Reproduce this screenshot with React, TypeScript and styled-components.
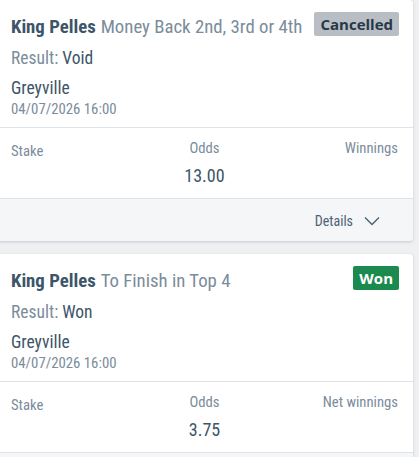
import React from 'react';
import styled, { createGlobalStyle } from 'styled-components';

const GlobalStyle = createGlobalStyle`
  html, body {
    margin: 0;
    padding: 0;
    background: #eef0f2;
    font-family: Roboto, "Liberation Sans", sans-serif;
    font-stretch: 75%;
  }
`;

const List = styled.div`
  display: flex;
  flex-direction: column;
  gap: 13px;
  padding: 0 6px 0 0;
  margin: 0 0 0 -4px;
`;

const Card = styled.div`
  background: #fff;
  border-radius: 4px;
  box-shadow: 0 1px 3px rgba(40, 60, 80, 0.22);
  overflow: hidden;
`;

const Body = styled.div`
  padding: 11px 14px 0 15px;
`;

const HeadRow = styled.div`
  display: flex;
  align-items: flex-start;
  justify-content: space-between;
`;

const Title = styled.div`
  font-size: 18.8px;
  line-height: 24px;
  padding-top: 4px;
  color: #7b8c9b;
`;

const Horse = styled.span`
  font-weight: 700;
  color: #3d5568;
  margin-right: 5px;
`;

const Badge = styled.span<{ $kind: 'cancelled' | 'won' }>`
  display: inline-block;
  font-family: "Open Sans", "Liberation Sans", sans-serif;
  font-stretch: 100%;
  font-weight: 700;
  font-size: 15px;
  line-height: 24px;
  padding: 0 6px;
  border-radius: 2px;
  margin-top: 1px;
  background: ${(p) => (p.$kind === 'won' ? '#1b8a4f' : '#b9bec4')};
  color: ${(p) => (p.$kind === 'won' ? '#fff' : '#263849')};
`;

const Result = styled.div`
  font-size: 17.5px;
  line-height: 20px;
  margin-top: 9px;
  color: #7b8c9b;
  span {
    color: #3d5568;
  }
`;

const Venue = styled.div`
  font-size: 17.5px;
  line-height: 20px;
  margin-top: 10px;
  color: #3d5568;
`;

const Date = styled.div`
  font-size: 14.8px;
  line-height: 18px;
  margin-top: 2px;
  color: #7b8c9b;
`;

const Stats = styled.div`
  display: grid;
  grid-template-columns: 1fr 1fr 1fr;
  margin-top: 9px;
  border-top: 1px solid #dfe3e7;
  padding: 11px 15px 0 15px;
  height: 71px;
  box-sizing: border-box;
`;

const StatCol = styled.div<{ $align: 'left' | 'center' | 'right' }>`
  text-align: ${(p) => p.$align};
  display: flex;
  flex-direction: column;
  align-items: ${(p) =>
    p.$align === 'left' ? 'flex-start' : p.$align === 'right' ? 'flex-end' : 'center'};
`;

const StatLabel = styled.div<{ $drop?: boolean }>`
  font-size: 14.7px;
  line-height: 18px;
  color: #7b8c9b;
  margin-top: ${(p) => (p.$drop ? '3px' : '0')};
`;

const StatValue = styled.div`
  font-size: 18px;
  line-height: 22px;
  margin-top: 8px;
  color: #3d5568;
`;

const Footer = styled.div`
  display: flex;
  justify-content: flex-end;
  align-items: center;
  gap: 11px;
  height: 43px;
  box-sizing: border-box;
  padding: 2px 33px 0 0;
  background: #f4f6f8;
  border-top: 1px solid #dfe3e7;
  font-size: 14px;
  color: #4d6274;
`;

type Bet = {
  market: string;
  result: string;
  status: 'cancelled' | 'won';
  odds: string;
  winLabel: string;
};

const bets: Bet[] = [
  {
    market: 'Money Back 2nd, 3rd or 4th',
    result: 'Void',
    status: 'cancelled',
    odds: '13.00',
    winLabel: 'Winnings',
  },
  {
    market: 'To Finish in Top 4',
    result: 'Won',
    status: 'won',
    odds: '3.75',
    winLabel: 'Net winnings',
  },
];

function Chevron() {
  return (
    <svg width="16" height="10" viewBox="0 0 16 10" fill="none">
      <path d="M1 1.5l7 7 7-7" stroke="#4d6274" strokeWidth="1.4" />
    </svg>
  );
}

export default function App() {
  return (
    <>
      <GlobalStyle />
      <List>
        {bets.map((b, i) => (
          <Card key={i}>
            <Body>
              <HeadRow>
                <Title>
                  <Horse>King Pelles</Horse>
                  {b.market}
                </Title>
                <Badge $kind={b.status}>{b.status === 'won' ? 'Won' : 'Cancelled'}</Badge>
              </HeadRow>
              <Result>
                Result: <span>{b.result}</span>
              </Result>
              <Venue>Greyville</Venue>
              <Date>04/07/2026 16:00</Date>
            </Body>
            <Stats>
              <StatCol $align="left">
                <StatLabel $drop>Stake</StatLabel>
              </StatCol>
              <StatCol $align="center">
                <StatLabel>Odds</StatLabel>
                <StatValue>{b.odds}</StatValue>
              </StatCol>
              <StatCol $align="right">
                <StatLabel>{b.winLabel}</StatLabel>
              </StatCol>
            </Stats>
            <Footer>
              Details <Chevron />
            </Footer>
          </Card>
        ))}
      </List>
    </>
  );
}
